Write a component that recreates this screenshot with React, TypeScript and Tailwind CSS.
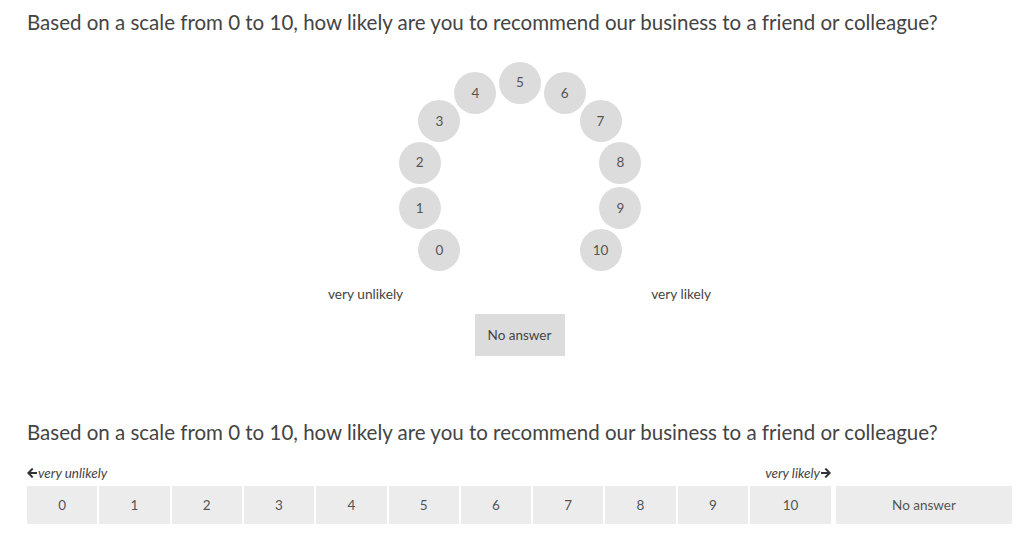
import React from "react";

const QUESTION =
  "Based on a scale from 0 to 10, how likely are you to recommend our business to a friend or colleague?";

// Radial NPS picker: 11 options laid on an arc, 360/14 degrees apart, 5 on top.
// Coordinates are page-based; the canvas starts right under the heading (y = 34).
const CANVAS_TOP = 34;
const ARC_CX = 520;
const ARC_CY = 185.5;
const ARC_R = 103;
const BUBBLE = 42;

function arcPoint(n: number) {
  const deg = 90 + (5 - n) * (360 / 14);
  const rad = (deg * Math.PI) / 180;
  return {
    x: ARC_CX + ARC_R * Math.cos(rad),
    y: ARC_CY - ARC_R * Math.sin(rad),
  };
}

function ArrowLeft() {
  return (
    <svg width="10" height="10" viewBox="0 0 10 10" className="inline-block">
      <path d="M9.5 5H1.8M5 1.3L1.3 5L5 8.7" fill="none" stroke="#333" strokeWidth="2" strokeLinecap="square" />
    </svg>
  );
}

function ArrowRight() {
  return (
    <svg width="10" height="10" viewBox="0 0 10 10" className="inline-block">
      <path d="M0.5 5H8.2M5 1.3L8.7 5L5 8.7" fill="none" stroke="#333" strokeWidth="2" strokeLinecap="square" />
    </svg>
  );
}

function RadialScale() {
  const values = Array.from({ length: 11 }, (_, i) => i);
  return (
    <div className="relative h-[268px] w-full">
      {values.map((n) => {
        const p = arcPoint(n);
        return (
          <button
            key={n}
            className="absolute flex h-[42px] w-[42px] items-center justify-center rounded-full bg-[#dcdcdc] text-[13.5px] text-[#555]"
            style={{ left: p.x - BUBBLE / 2, top: p.y - BUBBLE / 2 - CANVAS_TOP }}
          >
            {n}
          </button>
        );
      })}
      <div className="absolute left-0 right-0 top-[252px] flex">
        <span className="ml-[328px] text-[13.7px] leading-[16px] text-[#444]">very unlikely</span>
        <span className="ml-[248px] text-[13.7px] leading-[16px] text-[#444]">very likely</span>
      </div>
    </div>
  );
}

export default function App() {
  const cells = Array.from({ length: 10 }, (_, i) => i);
  return (
    <div
      className="h-[548px] w-[1024px] overflow-hidden bg-white text-[#444]"
      style={{ fontFamily: "Lato, 'Open Sans', sans-serif" }}
    >
      <h2 className="pl-[27px] pt-[10px] text-[20.5px] font-normal leading-[24px] text-[#444]">{QUESTION}</h2>

      <RadialScale />

      <div className="mx-[27px] mt-[12px] flex w-[985px] justify-center">
        <button className="h-[42px] w-[90px] bg-[#dcdcdc] text-[13.5px] text-[#444]">No answer</button>
      </div>

      <h2 className="mt-[64px] pl-[27px] text-[20.5px] font-normal leading-[24px] text-[#444]">{QUESTION}</h2>

      <div className="mx-[27px] mt-[21px] w-[985px]">
        <div className="grid grid-cols-[repeat(10,1fr)_81px_179px] gap-x-[2px]">
          <div className="col-span-10 flex items-center gap-[1px] text-[13.5px] italic leading-[16px] text-[#444]">
            <ArrowLeft />
            <span>very unlikely</span>
          </div>
          <div className="flex items-center justify-end gap-[1px] text-[13.5px] italic leading-[16px] text-[#444]">
            <span>very likely</span>
            <ArrowRight />
          </div>
          <div />
        </div>
        <div className="mt-[5px] grid grid-cols-[repeat(10,1fr)_81px_179px] gap-x-[2px]">
          {cells.map((n) => (
            <button key={n} className="h-[38px] bg-[#ececec] text-[13.5px] text-[#555]">
              {n}
            </button>
          ))}
          <button className="h-[38px] bg-[#ececec] text-[13.5px] text-[#555]">10</button>
          <button className="ml-[3px] h-[38px] bg-[#ececec] text-[13.5px] text-[#555]">No answer</button>
        </div>
      </div>
    </div>
  );
}
